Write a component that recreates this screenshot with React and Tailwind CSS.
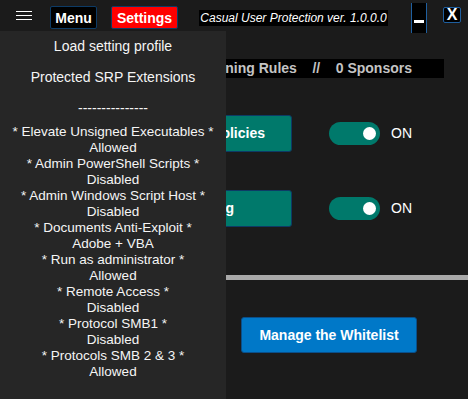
import { useState } from 'react';

const protections = [
    ['* Elevate Unsigned Executables *', 'Allowed'],
    ['* Admin PowerShell Scripts *', 'Disabled'],
    ['* Admin Windows Script Host *', 'Disabled'],
    ['* Documents Anti-Exploit *', 'Adobe + VBA'],
    ['* Run as administrator *', 'Allowed'],
    ['* Remote Access *', 'Disabled'],
    ['* Protocol SMB1 *', 'Disabled'],
    ['* Protocols SMB 2 & 3 *', 'Allowed'],
];

// Pill switch with the knob on the right when enabled
const Toggle = ({ on, onChange }) => (
    <div className="flex items-center">
        <button
            onClick={() => onChange(!on)}
            className={`w-[51px] h-[23px] rounded-full flex items-center px-[4px] ${on ? 'bg-[#00796b] justify-end' : 'bg-[#555] justify-start'}`}
        >
            <span className="w-[13px] h-[13px] rounded-full bg-white" />
        </button>
        <span className="ml-[11px] text-[14px] text-white">{on ? 'ON' : 'OFF'}</span>
    </div>
);

const App = () => {
    const [policies, setPolicies] = useState(true);
    const [logging, setLogging] = useState(true);

    return (
        <div
            className="relative w-[468px] h-[399px] overflow-hidden bg-[#1b1b1b] text-white"
            style={{ fontFamily: '"Liberation Sans", Arial, sans-serif' }}
        >
            {/* Title Bar */}
            <div className="h-[31px] flex items-start">
                <div className="ml-[16px] mt-[11px] w-[16px] flex flex-col gap-[3px]">
                    <span className="h-px bg-white" />
                    <span className="h-px bg-white" />
                    <span className="h-px bg-white" />
                </div>
                <button className="ml-[18px] mt-[6px] w-[47px] h-[23px] bg-black border border-[#0d3b66] rounded-[2px] text-[14px] font-bold leading-none">
                    Menu
                </button>
                <button className="ml-[14px] mt-[6px] w-[67px] h-[23px] bg-[#ff0000] border border-[#0d3b66] rounded-[2px] text-[14px] font-bold leading-none">
                    Settings
                </button>
                <div className="ml-[21px] mt-[10px] w-[189px] h-[16px] bg-black flex items-center justify-center text-[12px] italic leading-none whitespace-nowrap overflow-hidden">
                    Casual User Protection ver. 1.0.0.0
                </div>
                <button className="ml-[23px] mt-[3px] w-[16px] h-[30px] bg-black border-x border-[#1f5f9f] flex justify-center">
                    <span className="mt-[17px] w-[10px] h-[3px] bg-white" />
                </button>
                <button className="ml-[16px] mt-[7px] w-[18px] h-[16px] bg-black border border-[#1f5f9f] rounded-[2px] text-[16px] font-bold leading-none flex items-center justify-center">
                    X
                </button>
            </div>

            {/* Main Content */}
            <div className="flex flex-col">
                <div className="mt-[28px] mx-[24px] h-[19px] bg-black flex items-center justify-end pr-[32px] text-[14px] font-bold text-[#c4c4c4] whitespace-pre">
                    {'Active: 24 Hardening Rules    //    0 Sponsors'}
                </div>

                <div className="mt-[37px] flex items-center">
                    <button
                        onClick={() => setPolicies(!policies)}
                        className="ml-[24px] w-[268px] h-[37px] bg-[#00796b] border border-[#0d3b66] rounded-[3px] flex items-center justify-end pr-[26px] text-[14px] font-bold"
                    >
                        Software Restriction Policies
                    </button>
                    <div className="ml-[37px]">
                        <Toggle on={policies} onChange={setPolicies} />
                    </div>
                </div>

                <div className="mt-[38px] flex items-center">
                    <button
                        onClick={() => setLogging(!logging)}
                        className="ml-[24px] w-[268px] h-[37px] bg-[#00796b] border border-[#0d3b66] rounded-[3px] flex items-center justify-end pr-[57px] text-[14px] font-bold"
                    >
                        Event Logging
                    </button>
                    <div className="ml-[37px]">
                        <Toggle on={logging} onChange={setLogging} />
                    </div>
                </div>

                <div className="mt-[48px] h-[5px] bg-[#a9a9a9]" />

                <div className="mt-[37px] flex">
                    <button className="ml-[241px] w-[176px] h-[36px] bg-[#0078c8] border border-[#0a4f8a] rounded-[3px] text-[14px] font-bold">
                        Manage the Whitelist
                    </button>
                </div>
            </div>

            {/* Menu Dropdown (overlays content) */}
            <div className="absolute left-0 top-[31px] w-[226px] h-[368px] bg-[#262626] text-[14px] text-[#f5f5f5] text-center">
                <div className="h-[31px] flex items-center justify-center">Load setting profile</div>
                <div className="h-[31px] flex items-center justify-center">Protected SRP Extensions</div>
                <div className="h-[31px] flex items-center justify-center">---------------</div>
                <div className="text-[13.5px] leading-[16px]">
                    {protections.map(([name, state]) => (
                        <div key={name}>
                            <div>{name}</div>
                            <div>{state}</div>
                        </div>
                    ))}
                </div>
            </div>
        </div>
    );
};

export default App;
